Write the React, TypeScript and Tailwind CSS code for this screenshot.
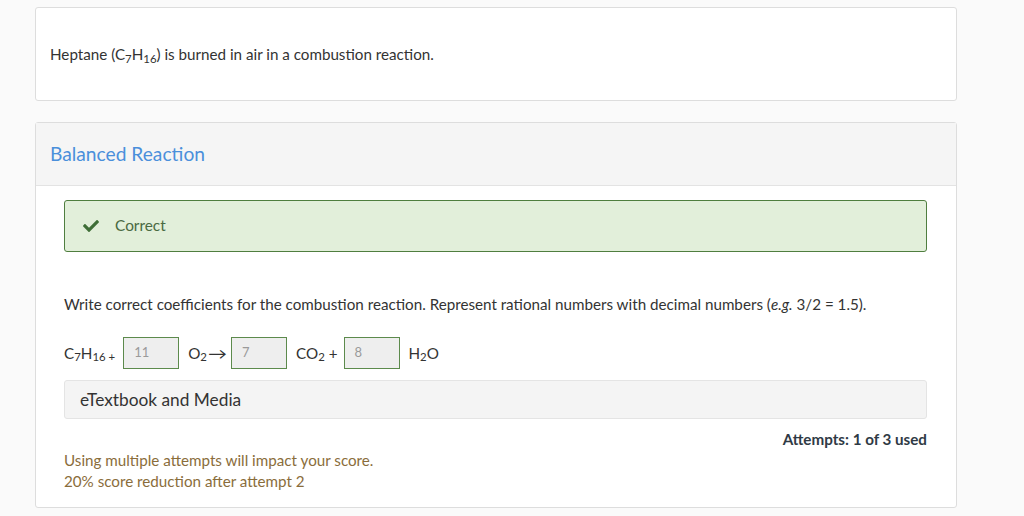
import React from "react";

function Box({ v }: { v: string }) {
  return (
    <div className="w-[56px] h-[32px] bg-[#eeeeee] border border-[#5c8a4c] flex items-center pl-[10px] text-[13px] text-[#9a9a9a]">
      {v}
    </div>
  );
}

export default function App() {
  return (
    <div
      className="min-h-[516px] bg-[#fafafa] pl-[35px] pr-[67px] pt-[7px] pb-[9px] text-[#333333]"
      style={{ fontFamily: "Lato, 'Open Sans', sans-serif" }}
    >
      <div className="bg-white border border-[#dddddd] rounded-[3px] px-[14px] py-[35px] text-[15.2px] leading-[22px]">
        Heptane (C<sub>7</sub>H<sub>16</sub>) is burned in air in a combustion reaction.
      </div>

      <div className="mt-[21px] bg-white border border-[#dddddd] rounded-[3px]">
        <div className="bg-[#f5f5f5] border-b border-[#e3e3e3] px-[14px] h-[63px] flex items-center text-[19.2px] text-[#4a8fdb]">
          Balanced Reaction
        </div>
        <div className="pl-[28px] pr-[29px] pt-[14px] pb-[15px]">
          <div className="h-[52px] bg-[#e2efda] border border-[#4f7e3f] rounded-[3px] flex items-center pl-[18px] text-[15.4px] text-[#4a6a42]">
            <svg viewBox="0 0 512 512" className="w-[16px] h-[16px] mr-[16px]" fill="#3f6e37">
              <path d="M173.898 439.404l-166.4-166.4c-9.997-9.997-9.997-26.206 0-36.204l36.203-36.204c9.997-9.998 26.207-9.998 36.204 0L192 312.69 432.095 72.596c9.997-9.997 26.207-9.997 36.204 0l36.203 36.204c9.997 9.997 9.997 26.206 0 36.204l-294.4 294.401c-9.998 9.997-26.207 9.997-36.204-.001z" />
            </svg>
            Correct
          </div>

          <p className="mt-[41px] text-[15.2px] leading-[22px]">
            Write correct coefficients for the combustion reaction. Represent rational numbers with decimal numbers (<i>e.g.</i> 3/2 = 1.5).
          </p>

          <div className="mt-[22px] flex items-center text-[15.2px]">
            <span className="mr-[8px]">
              C<sub>7</sub>H<sub>16 +</sub>
            </span>
            <Box v="11" />
            <span className="ml-[9px] mr-[6px]">
              O<sub>2</sub>
              <span className="inline-block scale-x-125 ml-[3px]">→</span>
            </span>
            <Box v="7" />
            <span className="ml-[9px] mr-[6px]">
              CO<sub>2</sub> +
            </span>
            <Box v="8" />
            <span className="ml-[9px]">
              H<sub>2</sub>O
            </span>
          </div>

          <div className="mt-[11px] h-[39px] bg-[#f4f4f4] border border-[#e4e4e4] rounded-[3px] flex items-center px-[15px] text-[17.3px]">
            eTextbook and Media
          </div>

          <div className="mt-[9px] text-right text-[15.2px] font-bold leading-[22px] text-[#2f3a45]">
            Attempts: 1 of 3 used
          </div>

          <div className="mt-[0px] text-[15.2px] leading-[21px] text-[#8a6d3b]">
            <div>Using multiple attempts will impact your score.</div>
            <div>20% score reduction after attempt 2</div>
          </div>
        </div>
      </div>
    </div>
  );
}
